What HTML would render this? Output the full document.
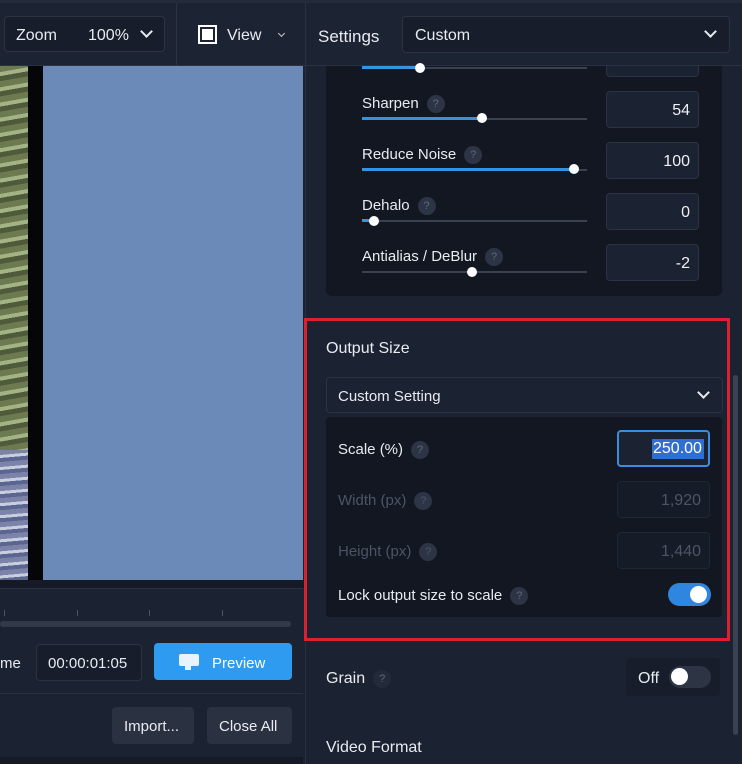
<!DOCTYPE html>
<html><head><meta charset="utf-8"><style>
*{box-sizing:border-box;margin:0;padding:0}
body{width:742px;height:764px;overflow:hidden;background:#1b2232;font-family:"Liberation Sans",sans-serif;color:#e6e9ef;position:relative}
.a{position:absolute}
.t{font-size:15px;color:#e8ebf0;margin-top:2px}
.box{position:absolute;background:#1b2231;border:1px solid #2b3345;border-radius:4px}
.q{display:inline-block;width:18px;height:18px;border-radius:50%;background:#2c3445;color:#5f6879;font-size:11px;text-align:center;line-height:18px;vertical-align:middle;margin-left:8px}
.trk{position:absolute;height:2px;background:#3a4252}
.fill{position:absolute;height:3px;background:#3593e4}
.knob{position:absolute;width:10px;height:10px;border-radius:50%;background:#fff}
.num{position:absolute;text-align:right;padding-right:8px;font-size:16px;line-height:38px;color:#eef0f4;background:#1b2231;border:1px solid #2b3345;border-radius:4px}
.chev{position:absolute;width:9px;height:9px;border-right:2px solid #e8ebf0;border-bottom:2px solid #e8ebf0;transform:rotate(45deg)}
</style></head><body>
<div class="a" style="left:0;top:0;width:742px;height:66px;background:#1c2333;border-bottom:1px solid #2a3142"></div>
<div class="a" style="left:0;top:0;width:742px;height:3px;background:#232a3a"></div>
<div class="box" style="left:4px;top:16px;width:161px;height:36px;background:#171d2a"></div>
<div class="a t" style="left:16px;top:25px;font-size:16px">Zoom</div>
<div class="a t" style="left:88px;top:25px;font-size:16px">100%</div>
<div class="chev" style="left:142px;top:27px"></div>
<div class="a" style="left:176px;top:3px;width:1px;height:63px;background:#2a3142"></div>
<div class="a" style="left:198px;top:25px;width:19px;height:19px;border:2px solid #fff;background:#1c2333"><div style="margin:2px;width:11px;height:11px;background:#fff"></div></div>
<div class="a t" style="left:227px;top:25px;font-size:16px">View</div>
<div class="a" style="left:279px;top:31px;width:5px;height:5px;border-right:1.5px solid #ccc;border-bottom:1.5px solid #ccc;transform:rotate(45deg)"></div>
<div class="a" style="left:305px;top:3px;width:1px;height:761px;background:#2a3142"></div>
<div class="a t" style="left:318px;top:25px;font-size:17px">Settings</div>
<div class="box" style="left:402px;top:16px;width:328px;height:37px;background:#171d2a"></div>
<div class="a t" style="left:415px;top:25px;font-size:16px">Custom</div>
<div class="chev" style="left:706px;top:27px"></div>

<div class="a" style="left:0;top:66px;width:28px;height:514px;background:repeating-linear-gradient(170deg,#6d7a50 0 6px,#a3b384 6px 10px,#4e5a3a 10px 15px),linear-gradient(#7c8a60,#7c8a60)"></div>
<div class="a" style="left:0;top:450px;width:28px;height:130px;background:repeating-linear-gradient(175deg,#7b84a8 0 5px,#c8cde0 5px 8px,#5a6590 8px 12px)"></div>
<div class="a" style="left:28px;top:66px;width:15px;height:514px;background:#050608"></div>
<div class="a" style="left:43px;top:66px;width:260px;height:514px;background:#6b8ab8"></div>
<div class="a" style="left:0;top:580px;width:305px;height:8px;background:#151a26"></div>
<div class="a" style="left:0;top:588px;width:303px;height:1px;background:#2a3142"></div>
<div class="a" style="left:4px;top:610px;width:1px;height:6px;background:#4a5263"></div>
<div class="a" style="left:77px;top:610px;width:1px;height:6px;background:#4a5263"></div>
<div class="a" style="left:149px;top:610px;width:1px;height:6px;background:#4a5263"></div>
<div class="a" style="left:222px;top:610px;width:1px;height:6px;background:#4a5263"></div>
<div class="a" style="left:0;top:621px;width:291px;height:6px;border-radius:3px;background:#323a4a"></div>
<div class="a t" style="left:0;top:653px;font-size:15px">me</div>
<div class="box" style="left:36px;top:644px;width:106px;height:37px;background:#171d2a"></div>
<div class="a t" style="left:48px;top:653px;font-size:15px">00:00:01:05</div>
<div class="a" style="left:154px;top:643px;width:138px;height:37px;background:#2e9bf0;border-radius:4px"></div>
<div class="a" style="left:179px;top:654px;width:20px;height:12px;background:#e8f3fe;border-radius:2px"></div>
<div class="a" style="left:185px;top:666px;width:6px;height:4px;background:#e8f3fe"></div>
<div class="a" style="left:212px;top:655px;font-size:15px;color:#fff">Preview</div>
<div class="a" style="left:0;top:693px;width:303px;height:1px;background:#2a3142"></div>
<div class="a" style="left:112px;top:707px;width:82px;height:37px;background:#2a3242;border-radius:4px"></div>
<div class="a t" style="left:124px;top:716px;font-size:15px">Import...</div>
<div class="a" style="left:207px;top:707px;width:85px;height:37px;background:#2a3242;border-radius:4px"></div>
<div class="a t" style="left:219px;top:716px;font-size:15px">Close All</div>
<div class="a" style="left:0;top:757px;width:303px;height:7px;background:#151a26"></div>

<div class="a" style="left:326px;top:66px;width:396px;height:230px;background:#121722;border-radius:0 0 6px 6px"></div>
<div class="trk" style="left:362px;top:67px;width:225px"></div>
<div class="fill" style="left:362px;top:66px;width:58px"></div>
<div class="knob" style="left:415px;top:63px"></div>
<div class="num" style="left:606px;top:66px;width:93px;height:11px;border-top:none;border-radius:0 0 4px 4px"></div>

<div class="a t" style="left:362px;top:93px">Sharpen<span class="q">?</span></div>
<div class="trk" style="left:362px;top:118px;width:225px"></div>
<div class="fill" style="left:362px;top:117px;width:120px"></div>
<div class="knob" style="left:477px;top:113px"></div>
<div class="num" style="left:606px;top:91px;width:93px;height:37px">54</div>

<div class="a t" style="left:362px;top:144px">Reduce Noise<span class="q">?</span></div>
<div class="trk" style="left:362px;top:169px;width:225px"></div>
<div class="fill" style="left:362px;top:168px;width:212px"></div>
<div class="knob" style="left:569px;top:164px"></div>
<div class="num" style="left:606px;top:142px;width:93px;height:37px">100</div>

<div class="a t" style="left:362px;top:195px">Dehalo<span class="q">?</span></div>
<div class="trk" style="left:362px;top:220px;width:225px"></div>
<div class="fill" style="left:362px;top:219px;width:12px"></div>
<div class="knob" style="left:369px;top:216px"></div>
<div class="num" style="left:606px;top:193px;width:93px;height:37px">0</div>

<div class="a t" style="left:362px;top:246px">Antialias / DeBlur<span class="q">?</span></div>
<div class="trk" style="left:362px;top:271px;width:225px"></div>
<div class="knob" style="left:467px;top:267px"></div>
<div class="num" style="left:606px;top:244px;width:93px;height:37px">-2</div>

<div class="a" style="left:304px;top:318px;width:426px;height:323px;border:3px solid #d8232f"></div>
<div class="a t" style="left:326px;top:338px;font-size:16px">Output Size</div>
<div class="box" style="left:326px;top:377px;width:397px;height:36px;background:#1b2231"></div>
<div class="a t" style="left:338px;top:386px">Custom Setting</div>
<div class="chev" style="left:699px;top:388px"></div>
<div class="a" style="left:326px;top:417px;width:396px;height:200px;background:#121722;border-radius:4px"></div>
<div class="a t" style="left:338px;top:439px">Scale (%)<span class="q">?</span></div>
<div class="a" style="left:617px;top:430px;width:93px;height:37px;border:2px solid #3a8ee0;border-radius:4px;background:#1b2231"></div>
<div class="a" style="left:652px;top:439px;width:52px;height:20px;background:#2f6fd0"></div>
<div class="a" style="left:653px;top:440px;font-size:16px;color:#fff">250.00</div>
<div class="a t" style="left:338px;top:490px;color:#4c5566">Width (px)<span class="q" style="color:#4c5566">?</span></div>
<div class="num" style="left:617px;top:481px;width:93px;height:37px;color:#4c5566;background:#151b27;border-color:#1f2634">1,920</div>
<div class="a t" style="left:338px;top:541px;color:#4c5566">Height (px)<span class="q" style="color:#4c5566">?</span></div>
<div class="num" style="left:617px;top:532px;width:93px;height:37px;color:#4c5566;background:#151b27;border-color:#1f2634">1,440</div>
<div class="a t" style="left:338px;top:585px">Lock output size to scale<span class="q">?</span></div>
<div class="a" style="left:668px;top:583px;width:43px;height:23px;border-radius:12px;background:#2f86de"></div>
<div class="a" style="left:690px;top:586px;width:17px;height:17px;border-radius:50%;background:#fff"></div>

<div class="a t" style="left:326px;top:668px;font-size:16px">Grain<span class="q" style="background:#232b3b">?</span></div>
<div class="a" style="left:626px;top:658px;width:94px;height:38px;background:#171d2a;border-radius:4px"></div>
<div class="a t" style="left:638px;top:668px;font-size:16px">Off</div>
<div class="a" style="left:669px;top:666px;width:42px;height:22px;border-radius:11px;background:#2d3444"></div>
<div class="a" style="left:671px;top:668px;width:17px;height:17px;border-radius:50%;background:#fff"></div>
<div class="a t" style="left:326px;top:737px;font-size:16px">Video Format</div>
<div class="a" style="left:733px;top:375px;width:5px;height:360px;border-radius:3px;background:#3a4252"></div>
</body></html>
